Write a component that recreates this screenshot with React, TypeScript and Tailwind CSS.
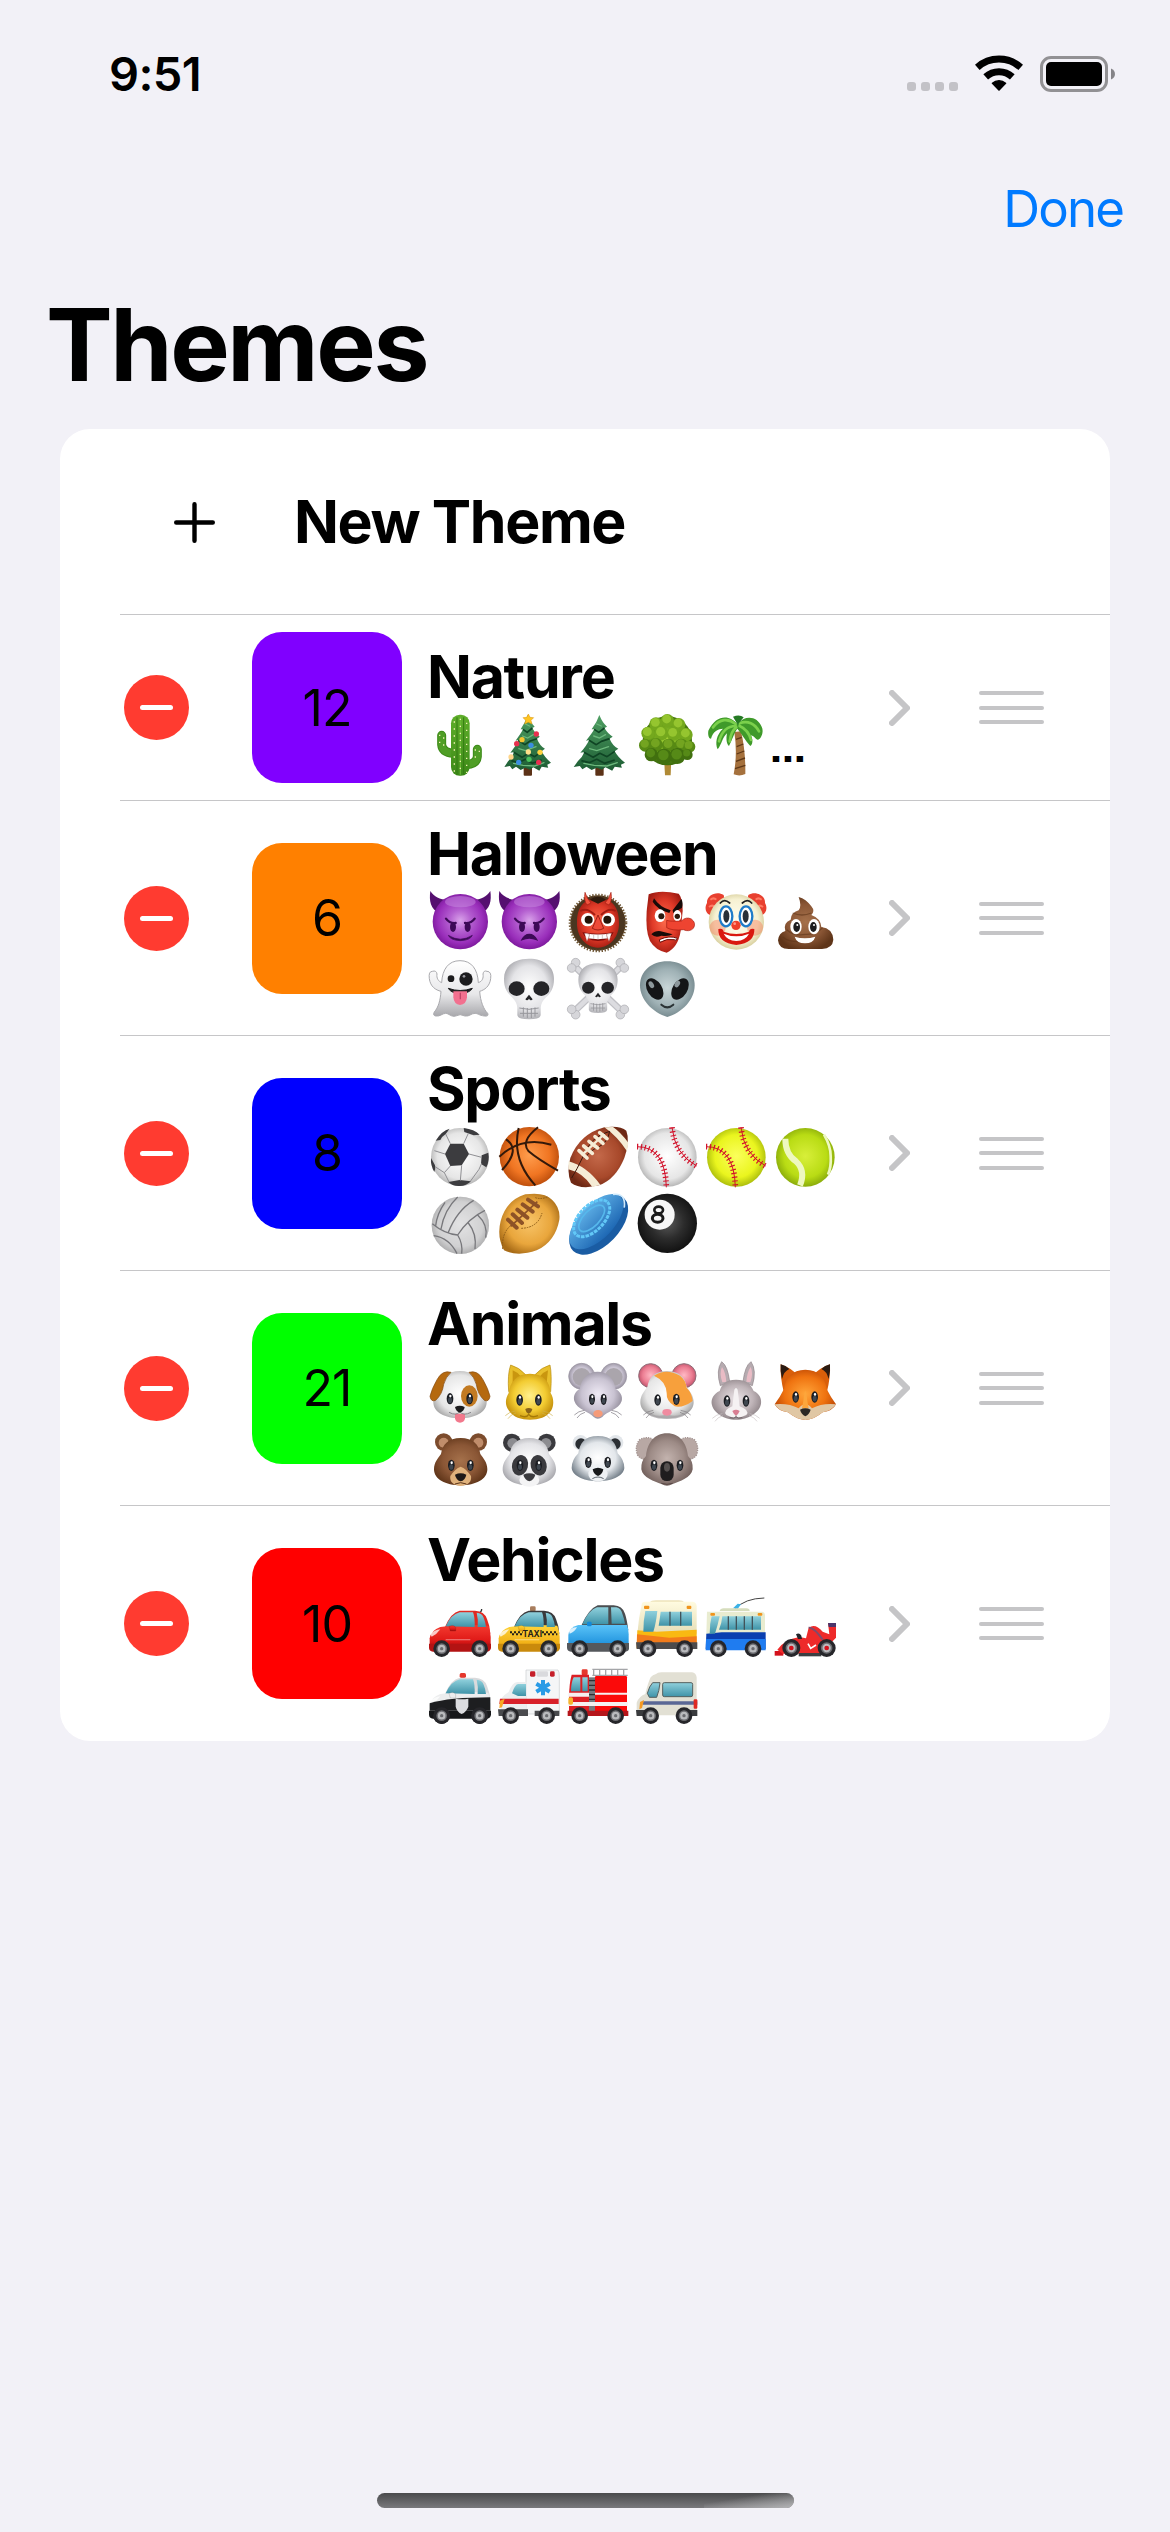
import React from "react";

/* ---------- shared paint ---------- */

type Stop = [number, string];

const radial: Record<string, Stop[]> = {
  gPurple: [[0, "#d9a2ea"], [0.35, "#b45fd0"], [0.72, "#9a2fbb"], [1, "#741293"]],
  gRed: [[0, "#fb6a4c"], [0.6, "#e03a28"], [1, "#a31c12"]],
  gCream: [[0, "#fffef0"], [0.7, "#f6f1d2"], [1, "#cfc58f"]],
  gBrown: [[0, "#a5714b"], [0.6, "#8a5635"], [1, "#5f3519"]],
  gBone: [[0, "#ffffff"], [0.65, "#e4e4e7"], [1, "#a9a9ae"]],
  gAlien: [[0, "#c9d6d8"], [0.6, "#9fb1b5"], [1, "#6f8388"]],
  gBall: [[0, "#ffffff"], [0.7, "#e6e6e6"], [1, "#a8a8a8"]],
  gOrange: [[0, "#ff9d4d"], [0.6, "#f07522"], [1, "#b44708"]],
  gLeather: [[0, "#c4694a"], [0.65, "#a8492b"], [1, "#6e2814"]],
  gSoft: [[0, "#fbff5c"], [0.65, "#eaf51e"], [1, "#9db008"]],
  gTennis: [[0, "#d8ef3a"], [0.65, "#b9dc14"], [1, "#7fa008"]],
  gRugby: [[0, "#f8c468"], [0.65, "#e9a63c"], [1, "#a96c17"]],
  gBlack: [[0, "#5a5a5a"], [0.5, "#2c2c2c"], [1, "#0d0d0d"]],
  gLeaf: [[0, "#a9d63a"], [0.5, "#6fa51c"], [1, "#33610a"]],
  gYellow: [[0, "#fff08c"], [0.6, "#f3cc32"], [1, "#c18d0a"]],
  gMouse: [[0, "#efeaf5"], [0.6, "#c9c3d2"], [1, "#8b8593"]],
  gRabbit: [[0, "#eae3e6"], [0.6, "#bfb4b8"], [1, "#8d8286"]],
  gFox: [[0, "#ffa53a"], [0.6, "#ef7310"], [1, "#b94403"]],
  gPolar: [[0, "#ffffff"], [0.6, "#e3e7eb"], [1, "#75808a"]],
  gKoala: [[0, "#c3b3ae"], [0.6, "#9d8b86"], [1, "#6f5d59"]],
  gPink: [[0, "#ffb9c4"], [0.6, "#ec7e93"], [1, "#b94a63"]],
};

const linear: Record<string, Stop[]> = {
  lGlass: [[0, "#8fd0dc"], [1, "#3f93a8"]],
  lRed: [[0, "#f43b30"], [0.6, "#e01a18"], [1, "#a80c0c"]],
  lTaxi: [[0, "#ffd53a"], [1, "#eca40a"]],
  lBlue: [[0, "#5ac3f8"], [1, "#1489d8"]],
  lCactus: [[0, "#5fae2a"], [1, "#3d8a18"]],
  lPine: [[0, "#4f9f63"], [1, "#1d5c33"]],
  lFrisbee: [[0, "#5fb0e6"], [1, "#1e68b4"]],
  lGhost: [[0, "#ffffff"], [0.6, "#e8e8ea"], [1, "#a8a8ac"]],
  lCream: [[0, "#fffbe0"], [1, "#e6deb8"]],
};

function Paint() {
  return (
    <svg className="absolute h-0 w-0" aria-hidden="true">
      <defs>
        {Object.entries(radial).map(([id, stops]) => (
          <radialGradient key={id} id={id} cx="0.5" cy="0.48" r="0.56">
            {stops.map(([o, c]) => (
              <stop key={o} offset={o} stopColor={c} />
            ))}
          </radialGradient>
        ))}
        {Object.entries(linear).map(([id, stops]) => (
          <linearGradient key={id} id={id} x1="0" y1="0" x2="0" y2="1">
            {stops.map(([o, c]) => (
              <stop key={o} offset={o} stopColor={c} />
            ))}
          </linearGradient>
        ))}
      </defs>
    </svg>
  );
}

/* ---------- drawing helpers (186 x 186 canvas) ---------- */

const HEAD =
  "M93 30C130 30 148 50 152 78C160 90 173 102 173 124C173 154 138 172 93 172C48 172 13 154 13 124C13 102 26 90 34 78C38 50 56 30 93 30Z";

const Eye = ({ x, y, rx = 10, ry = 17 }: { x: number; y: number; rx?: number; ry?: number }) => (
  <g>
    <ellipse cx={x} cy={y} rx={rx} ry={ry} fill="#1b1d22" />
    <ellipse cx={x} cy={y + ry * 0.3} rx={rx * 0.6} ry={ry * 0.5} fill="#3f4750" />
    <ellipse cx={x + 1} cy={y - ry * 0.45} rx={rx * 0.35} ry={ry * 0.25} fill="#fff" />
  </g>
);

const Whiskers = ({ c = "#b9b3a8", y = 152 }: { c?: string; y?: number }) => (
  <path
    d={`M52 ${y}Q34 ${y + 2} 22 ${y + 14}M54 ${y + 6}Q38 ${y + 10} 30 ${y + 23}M134 ${y}Q152 ${y + 2} 164 ${y + 14}M132 ${y + 6}Q148 ${y + 10} 156 ${y + 23}`}
    fill="none"
    stroke={c}
    strokeWidth="2"
  />
);

const Wheel = ({ x, y = 155, r = 25 }: { x: number; y?: number; r?: number }) => (
  <g>
    <circle cx={x} cy={y} r={r} fill="#26262a" />
    <circle cx={x} cy={y} r={r * 0.64} fill="#6d6e72" />
    <circle cx={x} cy={y} r={r * 0.46} fill="#b9babd" />
    <circle cx={x} cy={y} r={r * 0.2} fill="#6a6b6f" />
  </g>
);

const Pine = ({ cx, w }: { cx: number; w: number }) => {
  const x = (k: number) => cx + k * w;
  return (
    <g>
      <rect x={cx - 12} y={158} width={25} height={27} rx={3} fill="#5c3217" />
      <path
        d={`M${cx} 3Q${x(0.12)} 26 ${x(0.3)} 38L${x(0.2)} 42Q${x(0.34)} 60 ${x(0.52)} 68L${x(0.4)} 74Q${x(0.52)} 96 ${x(0.74)} 104L${x(0.6)} 112Q${x(0.74)} 132 ${x(1)} 146L${x(0.84)} 152L${x(0.88)} 161L${x(0.6)} 158L${x(0.5)} 170L${x(0.24)} 160L${x(0.1)} 167L${x(-0.1)} 161L${x(-0.3)} 168L${x(-0.5)} 158L${x(-0.66)} 166L${x(-0.76)} 156L${x(-1)} 159L${x(-0.84)} 142Q${x(-0.66)} 130 ${x(-0.58)} 114L${x(-0.74)} 116Q${x(-0.5)} 96 ${x(-0.4)} 78L${x(-0.52)} 80Q${x(-0.3)} 60 ${x(-0.2)} 46L${x(-0.3)} 46Q${x(-0.1)} 26 ${cx} 3Z`}
        fill="url(#lPine)"
      />
      <path
        d={`M${x(-0.2)} 46L${x(-0.02)} 55L${x(0.2)} 42M${x(-0.4)} 79L${x(-0.12)} 92L${x(0.08)} 82L${x(0.4)} 74M${x(-0.6)} 115L${x(-0.24)} 130L${x(0.02)} 118L${x(0.3)} 128L${x(0.6)} 112M${x(-0.7)} 140L${x(-0.4)} 146L${x(-0.1)} 136L${x(0.2)} 148L${x(0.6)} 138`}
        fill="none"
        stroke="#0f4424"
        strokeWidth="5"
        strokeLinejoin="round"
      />
      <path
        d={`M${x(-0.1)} 30L${x(0.08)} 36M${x(-0.22)} 66L${x(0)} 72L${x(0.24)} 62M${x(-0.38)} 104L${x(-0.1)} 110L${x(0.36)} 98M${x(-0.6)} 148L${x(-0.2)} 154L${x(0.3)} 156L${x(0.7)} 146`}
        fill="none"
        stroke="#6cb87c"
        strokeWidth="4"
        strokeLinecap="round"
      />
    </g>
  );
};

const DevilHead = () => (
  <g>
    <path d="M4 0C0 28 4 56 32 66L62 26C36 28 16 18 4 0Z" fill="#551070" />
    <path d="M184 0C188 28 184 56 156 66L126 26C152 28 172 18 184 0Z" fill="#551070" />
    <circle cx="94" cy="92" r="83" fill="url(#gPurple)" />
    <ellipse cx="94" cy="32" rx="46" ry="17" fill="#c78be0" opacity="0.5" />
    <ellipse cx="72" cy="108" rx="9" ry="15" fill="#3d0a57" />
    <ellipse cx="116" cy="108" rx="9" ry="15" fill="#3d0a57" />
    <path d="M51 83Q62 98 80 96M137 83Q126 98 108 96" fill="none" stroke="#3d0a57" strokeWidth="7" strokeLinecap="round" />
  </g>
);

const BallLaces = () => (
  <g>
    <path d="M3 62Q88 62 91 184M108 4Q116 84 182 120" fill="none" stroke="#d2132c" strokeWidth="3" />
    <path d="M3 62Q88 62 91 184" fill="none" stroke="#d2132c" strokeWidth="17" strokeDasharray="3.5 8" />
    <path d="M108 4Q116 84 182 120" fill="none" stroke="#d2132c" strokeWidth="17" strokeDasharray="3.5 8" />
  </g>
);

const RoundCar = ({ body, lower, roof }: { body: string; lower: string; roof: string }) => (
  <g>
    <path d="M48 90Q66 46 92 41H138Q166 42 174 66Q182 84 184 110H44Z" fill={roof} />
    <path d="M2 154V124Q6 100 34 90Q90 80 178 86Q184 100 185 120V154Q182 160 172 160H12Q3 160 2 154Z" fill={body} />
    <path d="M0 140H186V152Q184 164 172 164H12Q0 162 0 152Z" fill={lower} />
    <path d="M50 88Q66 52 92 46H132Q138 60 137 90Z" fill="url(#lGlass)" />
    <path d="M143 47Q160 48 164 62Q170 76 171 90H146Q148 66 143 47Z" fill="url(#lGlass)" />
    <path d="M4 112Q16 98 34 97Q24 112 8 119Z" fill="#fff" opacity="0.75" />
    <path d="M60 88Q76 82 80 92V102H64Z" fill={body} stroke="#00000033" strokeWidth="2" />
    <path d="M50 128H124" stroke="#fff" opacity="0.35" strokeWidth="4" />
    <Wheel x={38} />
    <Wheel x={152} />
  </g>
);

const Skull = () => (
  <g>
    <path
      d="M93 2C140 2 168 26 168 62C168 92 158 104 144 118C134 128 130 136 128 148V172Q126 184 93 184Q60 184 58 172V148C56 136 52 128 42 118C28 104 18 92 18 62C18 26 46 2 93 2Z"
      fill="url(#gBone)"
    />
    <ellipse cx="56" cy="92" rx="24" ry="22" fill="#252528" />
    <ellipse cx="130" cy="92" rx="24" ry="22" fill="#252528" />
    <path d="M93 110L82 124Q88 130 93 122Q98 130 104 124Z" fill="#252528" />
    <path d="M64 150Q93 158 122 150M66 166H120M76 148V176M88 150V180M100 150V180M111 148V176" stroke="#97979c" strokeWidth="3" fill="none" />
  </g>
);

/* ---------- emoji art ---------- */

const art: Record<string, React.ReactNode> = {
  "🌵": (
    <g>
      <path d="M38 64V92Q40 116 74 118M145 106V128Q143 150 112 152" fill="none" stroke="#3d8a18" strokeWidth="27" strokeLinecap="round" />
      <path d="M38 64V92Q40 116 74 118M145 106V128Q143 150 112 152" fill="none" stroke="#4f9e26" strokeWidth="21" strokeLinecap="round" />
      <rect x="66" y="2" width="56" height="183" rx="26" fill="url(#lCactus)" />
      <path d="M84 10V182M104 10V182" stroke="#347a14" strokeWidth="3" />
      <path d="M94 8V182" stroke="#68b534" strokeWidth="4" />
      <path d="M76 22V178M94 14V178M113 26V178M32 62V96M44 70V104M139 106V132M151 110V128" stroke="#f3efb4" strokeWidth="4" strokeDasharray="4 17" />
    </g>
  ),
  "🎄": (
    <g>
      <Pine cx={89} w={70} />
      <path d="M91 0L96 10L107 11L99 19L102 30L91 25L80 30L83 19L75 11L86 10Z" fill="#ffc421" stroke="#d9930b" strokeWidth="1.5" />
      {[
        [115, 60, "#e8304f"], [72, 77, "#f5c431"], [56, 89, "#e8304f"], [99, 94, "#3b8ee0"], [91, 114, "#ffe08a"],
        [126, 115, "#ffd23e"], [39, 129, "#ffd58a"], [62, 145, "#3b8ee0"], [122, 145, "#e8304f"], [93, 136, "#48c05c"],
      ].map(([x, y, c]) => (
        <circle key={`${x}-${y}`} cx={x} cy={y} r="8" fill={c as string} />
      ))}
    </g>
  ),
  "🌲": <Pine cx={97} w={77} />,
  "🌳": (
    <g>
      <path d="M84 130H106L104 184H87Z" fill="#b08a35" />
      <circle cx="94" cy="80" r="74" fill="url(#gLeaf)" />
      {[
        [94, 20, 20], [60, 30, 20], [128, 32, 20], [36, 58, 20], [76, 58, 21], [112, 60, 20], [150, 62, 20], [28, 94, 19],
        [60, 92, 20], [98, 94, 20], [136, 94, 20], [160, 98, 18], [46, 122, 20], [84, 128, 24], [124, 126, 24], [154, 122, 16],
      ].map(([x, y, r]) => (
        <g key={`${x}-${y}`}>
          <circle cx={x} cy={y} r={r} fill={y > 110 ? "#41700f" : y > 80 ? "#578a14" : "#74a81d"} />
          <circle cx={x - 2} cy={y - 5} r={r * 0.66} fill={y > 110 ? "#568a17" : y > 80 ? "#73a420" : "#95c52f"} />
        </g>
      ))}
    </g>
  ),
  "🌴": (
    <g>
      <path d="M88 54L108 52Q122 110 121 180Q104 188 86 181Q98 120 88 54Z" fill="#a5713d" />
      <path d="M93 76L110 70M95 98L115 90M95 120L118 111M93 142L120 132M90 164L121 154" stroke="#5e3716" strokeWidth="4" />
      <path d="M97 30C74 2 34 0 10 50C8 64 12 74 18 74C24 52 40 44 54 44C34 62 30 88 38 106C50 92 52 70 66 58C62 78 66 92 72 96C82 76 88 56 97 44C108 56 120 78 136 96C144 92 144 76 138 64C152 68 154 84 164 74C172 66 176 50 170 38C158 8 122 0 97 30Z" fill="#3f9a2a" />
      <path d="M92 30C70 12 44 14 24 40M92 36C66 36 50 54 42 82M94 40C80 50 76 66 74 82M104 36C122 44 134 62 138 78M104 28C128 18 150 30 162 52" stroke="#7bd04c" strokeWidth="8" fill="none" strokeLinecap="round" />
      <path d="M84 8Q104 0 116 10L98 32Z" fill="#257a24" />
    </g>
  ),
  "😈": (
    <g>
      <DevilHead />
      <path d="M58 133Q94 156 130 133Q124 148 94 149Q64 148 58 133Z" fill="#3d0a57" stroke="#3d0a57" strokeWidth="2" />
    </g>
  ),
  "👿": (
    <g>
      <DevilHead />
      <path d="M72 146Q80 130 94 130Q108 130 116 146Q94 136 72 146Z" fill="#3d0a57" stroke="#3d0a57" strokeWidth="4" />
    </g>
  ),
  "👹": (
    <g>
      <circle cx="93" cy="96" r="83" fill="#4a3620" />
      <circle cx="93" cy="96" r="84" fill="none" stroke="#6b5230" strokeWidth="8" strokeDasharray="4 5" />
      <path d="M93 22C136 22 156 50 156 94C158 136 130 170 93 170C56 170 28 136 30 94C30 50 50 22 93 22Z" fill="url(#gRed)" />
      <path d="M68 26Q93 8 118 26L93 38Z" fill="#2c1b0d" />
      <path d="M54 4Q50 30 60 42L72 36Q60 24 54 4ZM132 4Q136 30 126 42L114 36Q126 24 132 4Z" fill="#f2533e" stroke="#a31c12" strokeWidth="2" />
      <path d="M40 60Q60 48 84 72M146 60Q126 48 102 72" stroke="#a31c12" strokeWidth="6" fill="none" />
      <circle cx="62" cy="86" r="20" fill="#fff" />
      <circle cx="124" cy="86" r="20" fill="#fff" />
      <circle cx="65" cy="86" r="12" fill="#241408" />
      <circle cx="121" cy="86" r="12" fill="#241408" />
      <path d="M93 72L76 112Q93 122 110 112Z" fill="#ee4a38" stroke="#8b140d" strokeWidth="2.5" />
      <path d="M46 124Q93 132 140 124Q132 148 93 150Q54 148 46 124Z" fill="#7e0d0b" />
      <path d="M56 127Q93 134 130 127L126 142Q93 147 60 142Z" fill="#fff" />
      <path d="M66 129V142M80 131V144M93 132V145M106 131V144M120 129V142" stroke="#b9a9a4" strokeWidth="2" />
      <path d="M52 126L60 152L68 130ZM134 126L126 152L118 130Z" fill="#fff" stroke="#8b140d" strokeWidth="1" />
    </g>
  ),
  "👺": (
    <g>
      <path d="M38 10Q70 -4 128 8Q140 20 140 60L134 120Q126 170 92 185Q58 178 42 150Q28 120 32 60Z" fill="url(#gRed)" />
      <path d="M54 22Q72 50 104 58L100 66Q64 56 50 32ZM110 58L136 24Q142 34 138 50L112 66Z" fill="#170b08" />
      <ellipse cx="72" cy="74" rx="16" ry="19" fill="#fff" />
      <ellipse cx="124" cy="74" rx="12" ry="17" fill="#fff" />
      <circle cx="76" cy="76" r="9" fill="#2c1a0e" />
      <circle cx="124" cy="76" r="8" fill="#2c1a0e" />
      <path d="M92 88Q104 92 136 90Q150 76 166 84Q182 96 172 112Q160 124 142 116Q110 120 92 110Z" fill="#ee4431" stroke="#a31c12" strokeWidth="2" />
      <path d="M46 130Q60 116 80 122L110 130Q98 138 76 134Q58 142 46 130Z" fill="#170b08" />
      <path d="M70 146Q100 132 124 142Q122 152 114 146Q92 142 72 154Z" fill="#fff" stroke="#6c0e09" strokeWidth="3" />
    </g>
  ),
  "🤡": (
    <g>
      <path d="M56 12C34 -2 4 14 6 36C-4 52 4 76 24 72L62 40ZM130 12C152 -2 182 14 180 36C190 52 182 76 162 72L124 40Z" fill="#e8402f" />
      <path d="M16 26Q26 18 34 26M12 48Q22 40 30 48M170 26Q160 18 152 26M174 48Q164 40 156 48" stroke="#ff7a63" strokeWidth="6" fill="none" />
      <circle cx="94" cy="93" r="83" fill="url(#gCream)" />
      <circle cx="38" cy="110" r="24" fill="#f77f5d" opacity="0.45" />
      <circle cx="150" cy="110" r="24" fill="#f77f5d" opacity="0.45" />
      <ellipse cx="63" cy="76" rx="19" ry="30" fill="#fff" stroke="#1f7cc9" strokeWidth="7" />
      <ellipse cx="123" cy="76" rx="19" ry="30" fill="#fff" stroke="#1f7cc9" strokeWidth="7" />
      <ellipse cx="64" cy="76" rx="9" ry="19" fill="#2a3038" />
      <ellipse cx="122" cy="76" rx="9" ry="19" fill="#2a3038" />
      <path d="M46 36Q58 22 74 36M112 36Q128 22 140 36" stroke="#222" strokeWidth="5" fill="none" strokeLinecap="round" />
      <circle cx="93" cy="103" r="14" fill="#ee3f2b" />
      <circle cx="89" cy="98" r="4" fill="#ff9b8b" />
      <path d="M40 114Q54 110 56 122Q94 136 132 122Q134 110 148 114Q150 156 94 162Q38 156 40 114Z" fill="#d9180f" />
      <path d="M56 128Q94 144 132 128Q122 148 94 150Q66 148 56 128Z" fill="#fff" />
    </g>
  ),
  "💩": (
    <g>
      <path d="M74 18Q96 24 112 46Q124 60 112 72Q140 82 142 108Q176 112 178 146Q176 172 144 174H44Q14 174 12 148Q14 126 34 120Q26 96 50 86Q50 66 74 58Q84 46 74 18Z" fill="url(#gBrown)" />
      <path d="M56 66Q84 78 112 66M38 116Q60 136 94 130Q126 132 146 110M26 138Q50 158 100 150" stroke="#5f3519" strokeWidth="4" fill="none" opacity="0.6" />
      <ellipse cx="66" cy="107" rx="17" ry="23" fill="#fff" />
      <ellipse cx="120" cy="107" rx="17" ry="23" fill="#fff" />
      <ellipse cx="68" cy="108" rx="10" ry="15" fill="#1d1d1f" />
      <ellipse cx="118" cy="108" rx="10" ry="15" fill="#1d1d1f" />
      <circle cx="70" cy="102" r="3" fill="#fff" />
      <circle cx="120" cy="102" r="3" fill="#fff" />
      <path d="M62 137Q93 146 124 137Q118 157 93 157Q68 157 62 137Z" fill="#fff" />
    </g>
  ),
  "👻": (
    <g>
      <path
        d="M93 8C128 8 146 34 148 74C160 70 164 60 162 48Q164 36 174 40Q188 40 185 62C182 86 166 96 152 100C154 130 164 154 176 166Q180 176 166 174C150 172 146 166 138 166C126 166 122 176 108 174Q93 166 80 174C66 178 60 166 50 166C40 166 34 176 20 174Q10 172 16 162C28 148 34 128 36 100C20 96 4 86 1 62Q-2 40 10 40Q22 36 24 48C22 60 28 70 38 74C40 34 58 8 93 8Z"
        fill="url(#lGhost)"
        stroke="#aaaaae"
        strokeWidth="3"
      />
      <circle cx="66" cy="62" r="10" fill="#1c1c1e" />
      <circle cx="111" cy="63" r="20" fill="#1c1c1e" />
      <circle cx="105" cy="55" r="4" fill="#9a9aa0" />
      <path d="M58 91Q93 104 130 91Q122 106 93 106Q66 106 58 91Z" fill="#1c1c1e" stroke="#1c1c1e" strokeWidth="3" />
      <path d="M73 100H114V118Q112 140 93 141Q75 140 73 118Z" fill="#f2708f" />
      <path d="M94 104V124" stroke="#bf4667" strokeWidth="4" />
    </g>
  ),
  "💀": <Skull />,
  "☠️": (
    <g>
      <path d="M22 24L164 160M164 24L22 160" stroke="#c0c0c5" strokeWidth="21" strokeLinecap="round" />
      <path d="M22 24L164 160M164 24L22 160" stroke="#dcdce0" strokeWidth="13" strokeLinecap="round" />
      {[[26, 14], [14, 30], [160, 14], [172, 30], [26, 170], [14, 154], [160, 170], [172, 154]].map(([x, y]) => (
        <circle key={`${x}-${y}`} cx={x} cy={y} r="13" fill="#d6d6da" stroke="#a9a9ae" strokeWidth="2" />
      ))}
      <g transform="translate(20 14) scale(0.785 0.82)">
        <Skull />
      </g>
    </g>
  ),
  "👽": (
    <g>
      <path d="M94 10C142 10 176 40 176 82C176 126 138 164 94 177C50 164 12 126 12 82C12 40 46 10 94 10Z" fill="url(#gAlien)" />
      <ellipse cx="56" cy="93" rx="22" ry="35" transform="rotate(-32 56 93)" fill="#141517" />
      <ellipse cx="132" cy="93" rx="22" ry="35" transform="rotate(32 132 93)" fill="#141517" />
      <ellipse cx="46" cy="80" rx="7" ry="11" transform="rotate(-32 46 80)" fill="#8c979b" />
      <ellipse cx="124" cy="78" rx="7" ry="11" transform="rotate(32 124 78)" fill="#8c979b" />
      <path d="M76 140Q94 156 112 140" stroke="#2b3335" strokeWidth="6" fill="none" strokeLinecap="round" />
    </g>
  ),
  "⚽": (
    <g>
      <circle cx="93" cy="93" r="87" fill="url(#gBall)" />
      <path d="M64 53H104L120 84L98 118L64 120L48 84Z" fill="#3c3c3f" />
      <path d="M20 44Q38 14 62 8L50 24Q40 30 34 42ZM104 6Q136 10 152 26L134 28L106 18ZM158 88L178 80Q182 104 172 124L156 114ZM6 96L18 118Q20 128 16 138Q4 118 6 96ZM58 168L92 162L126 166Q110 182 88 180Q70 180 58 168Z" fill="#3c3c3f" />
      <path d="M64 53L50 24M104 53L118 22M120 84L158 94M98 118L94 164M64 120L46 140M48 84L16 74M46 140L18 122M46 140L60 168M150 130L158 112M150 130L124 166" stroke="#8f8f93" strokeWidth="3" fill="none" />
    </g>
  ),
  "🏀": (
    <g>
      <circle cx="94" cy="92" r="89" fill="url(#gOrange)" />
      <path d="M4 92Q70 30 160 56M62 6Q40 100 112 178M120 4Q66 46 92 76Q120 100 180 134M24 40Q70 70 12 132" stroke="#33190a" strokeWidth="6" fill="none" />
    </g>
  ),
  "🏈": (
    <g>
      <path d="M112 4Q160 -2 178 14Q190 46 172 96Q146 160 96 178Q40 192 12 170Q-2 140 10 96Q38 24 112 4Z" fill="url(#gLeather)" />
      <path d="M5 106Q58 120 100 176L76 183Q48 140 4 130ZM112 4Q150 30 180 76L184 50Q160 18 138 3Z" fill="#f5ecd6" />
      <path d="M14 156Q30 130 46 96Q70 30 128 16Q122 50 96 62Q64 76 54 98" stroke="#3c180c" strokeWidth="3" fill="none" />
      <path d="M44 88L112 24" stroke="#f5ecd6" strokeWidth="7" />
      <path d="M36 74L60 96M50 60L76 82M66 46L92 66M84 32L108 52M98 20L120 38" stroke="#f5ecd6" strokeWidth="11" strokeLinecap="round" />
    </g>
  ),
  "⚾": (
    <g>
      <circle cx="94" cy="94" r="88" fill="url(#gBall)" />
      <BallLaces />
    </g>
  ),
  "🥎": (
    <g>
      <circle cx="94" cy="94" r="88" fill="url(#gSoft)" />
      <BallLaces />
    </g>
  ),
  "🎾": (
    <g>
      <circle cx="94" cy="94" r="88" fill="url(#gTennis)" />
      <path d="M34 38Q34 84 66 106Q96 134 78 178" stroke="#eef8c0" strokeWidth="18" fill="none" />
      <path d="M150 26Q170 60 170 90Q172 124 162 146" stroke="#eef8c0" strokeWidth="8" fill="none" />
    </g>
  ),
  "🏐": (
    <g>
      <circle cx="94" cy="97" r="86" fill="url(#gBall)" />
      <circle cx="94" cy="97" r="86" fill="#9a9a9e" opacity="0.28" />
      <path d="M10 92Q46 122 86 126Q118 76 168 52M48 28Q24 62 20 98M86 12Q46 50 36 108M134 22Q84 52 58 118M86 126Q102 152 98 182M118 90Q144 122 138 168M146 66Q178 96 170 134M14 128Q60 134 84 182" stroke="#77777b" strokeWidth="4" fill="none" />
    </g>
  ),
  "🏉": (
    <g>
      <path d="M82 4Q140 -4 162 20Q188 44 184 80Q172 146 116 172Q60 192 18 172Q-4 130 8 84Q24 22 82 4Z" fill="url(#gRugby)" />
      <path d="M14 168Q10 120 40 96M70 106Q120 104 132 60M148 12Q128 20 112 14" stroke="#8b5a16" strokeWidth="3" strokeDasharray="5 3" fill="none" />
      <path d="M30 80L56 104M44 64L72 90M58 50L88 74M74 34L104 56M90 20L120 40" stroke="#8d5227" strokeWidth="12" strokeLinecap="round" />
      <path d="M38 100L118 26" stroke="#8d5227" strokeWidth="5" />
    </g>
  ),
  "🥏": (
    <g>
      <ellipse cx="95" cy="95" rx="110" ry="62" transform="rotate(-46 95 95)" fill="#1a5ca3" />
      <ellipse cx="88" cy="86" rx="104" ry="52" transform="rotate(-46 88 86)" fill="url(#lFrisbee)" />
      <ellipse cx="74" cy="76" rx="68" ry="37" transform="rotate(-46 74 76)" fill="none" stroke="#62c8f7" strokeWidth="9" strokeDasharray="11 3" />
      <ellipse cx="74" cy="76" rx="50" ry="24" transform="rotate(-46 74 76)" fill="none" stroke="#56b8ec" strokeWidth="5" />
      <path d="M140 4Q176 0 172 42" stroke="#cfeafc" strokeWidth="5" fill="none" strokeLinecap="round" />
    </g>
  ),
  "🎱": (
    <g>
      <circle cx="94" cy="91" r="89" fill="url(#gBlack)" />
      <circle cx="71" cy="65" r="45" fill="#f7f7f7" />
      <ellipse cx="68" cy="51" rx="13" ry="10" fill="none" stroke="#1b1b1b" strokeWidth="8" />
      <ellipse cx="65" cy="76" rx="16" ry="12" fill="none" stroke="#1b1b1b" strokeWidth="9" />
    </g>
  ),
  "🐶": (
    <g>
      <path d={HEAD} fill="url(#gBall)" />
      <path d="M66 34Q40 26 24 56Q8 84 3 106Q6 124 20 118Q40 100 44 70Q50 48 66 34ZM120 34Q146 26 162 56Q178 84 183 106Q180 124 166 118Q146 100 142 70Q136 48 120 34Z" fill="#b5690f" stroke="#82470a" strokeWidth="2" />
      <ellipse cx="121" cy="105" rx="25" ry="32" fill="#c27a22" />
      <Eye x={63} y={113} />
      <Eye x={122} y={113} />
      <path d="M78 158H108V172Q106 185 93 185Q80 185 78 172Z" fill="#f2788c" />
      <path d="M60 154Q82 166 92 152Q104 166 126 154" stroke="#88888c" strokeWidth="3" fill="none" />
      <path d="M78 138Q92 130 107 138Q106 150 92 155Q80 150 78 138Z" fill="#1c1c1e" />
    </g>
  ),
  "🐱": (
    <g>
      <path d="M38 12Q62 18 84 42L32 92Q28 40 38 12ZM156 12Q132 18 110 42L158 92Q162 40 156 12Z" fill="#e8bf2c" stroke="#b78a0b" strokeWidth="2" />
      <path d="M44 28Q60 34 70 48L44 64ZM150 28Q134 34 124 48L146 64Z" fill="#c9960f" />
      <path d="M96 38C138 38 156 64 158 96C168 112 168 132 160 148C146 170 122 176 96 176C70 176 46 170 32 148C20 132 22 112 32 96C36 64 54 38 96 38Z" fill="url(#gYellow)" />
      <Eye x={65} y={117} />
      <Eye x={121} y={117} />
      <path d="M82 144Q92 138 103 144Q100 156 92 158Q84 156 82 144Z" fill="#86611a" />
      <path d="M66 164Q86 172 92 160Q100 172 120 164" stroke="#a57908" strokeWidth="4" fill="none" />
      <Whiskers c="#cdb04a" y={150} />
    </g>
  ),
  "🐭": (
    <g>
      <circle cx="44" cy="46" r="39" fill="url(#gMouse)" stroke="#97919f" strokeWidth="2" />
      <circle cx="140" cy="46" r="39" fill="url(#gMouse)" stroke="#97919f" strokeWidth="2" />
      <circle cx="44" cy="48" r="27" fill="#aaa5ac" />
      <circle cx="140" cy="48" r="27" fill="#aaa5ac" />
      <path d="M92 32C124 32 142 56 146 84C160 92 168 106 164 120C156 146 116 152 106 168Q92 178 80 168C68 152 30 146 22 120C18 106 24 92 38 84C42 56 60 32 92 32Z" fill="url(#gMouse)" />
      <Eye x={75} y={115} rx={9} />
      <Eye x={110} y={115} rx={9} />
      <ellipse cx="93" cy="158" rx="14" ry="11" fill="#f59a78" />
      <Whiskers c="#77727c" y={148} />
    </g>
  ),
  "🐹": (
    <g>
      <circle cx="44" cy="44" r="36" fill="url(#gPink)" stroke="#8e6d78" strokeWidth="3" />
      <circle cx="144" cy="44" r="36" fill="url(#gPink)" stroke="#8e6d78" strokeWidth="3" />
      <path d={HEAD} fill="url(#gBall)" />
      <path d="M54 44Q90 20 132 44Q150 58 152 80Q168 96 170 120Q140 142 116 136Q90 120 92 96Q90 60 54 44Z" fill="#f7a03c" />
      <Eye x={65} y={117} />
      <Eye x={121} y={115} />
      <path d="M22 144Q60 174 92 160Q126 174 164 144Q150 174 93 174Q36 174 22 144Z" fill="#a3a0a2" opacity="0.7" />
      <ellipse cx="93" cy="154" rx="14" ry="10" fill="#f08ba0" />
      <Whiskers c="#807c80" y={148} />
    </g>
  ),
  "🐰": (
    <g>
      <path d="M50 2Q68 14 74 62L46 74Q32 28 50 2ZM138 2Q120 14 114 62L142 74Q156 28 138 2Z" fill="#b6abb0" stroke="#8d8286" strokeWidth="2" />
      <path d="M51 18Q62 34 64 62L52 64Q42 36 51 18ZM137 18Q126 34 124 62L136 64Q146 36 137 18Z" fill="#e9bcc5" />
      <path d="M93 56C124 56 138 70 146 90C164 98 170 114 168 128C164 154 130 176 93 176C56 176 24 154 20 128C18 114 26 98 44 90C50 70 62 56 93 56Z" fill="url(#gRabbit)" />
      <path d="M88 86Q93 76 98 86L104 136Q136 148 124 162Q93 178 64 162Q52 148 82 136Z" fill="#f5f2f3" />
      <Eye x={66} y={120} />
      <Eye x={123} y={120} />
      <path d="M82 150Q93 142 104 150Q100 160 93 164Q86 160 82 150Z" fill="#d97d92" />
      <path d="M93 164V170M74 170Q88 174 93 168Q100 174 112 170" stroke="#6e5f64" strokeWidth="3" fill="none" />
      <Whiskers c="#c9c1c4" y={158} />
    </g>
  ),
  "🦊": (
    <g>
      <path d="M20 10Q50 20 72 44L30 96Q18 50 20 10ZM168 10Q138 20 116 44L158 96Q170 50 168 10Z" fill="#d95f0a" />
      <path d="M20 10Q36 14 46 24Q30 30 24 54Q18 30 20 10ZM168 10Q152 14 142 24Q158 30 164 54Q170 30 168 10Z" fill="#2b1b12" />
      <path d="M94 26C134 26 154 52 158 84Q172 112 186 130Q176 150 146 154Q120 176 94 177Q68 176 42 154Q12 150 2 130Q16 112 30 84C34 52 54 26 94 26Z" fill="url(#gFox)" />
      <path d="M2 130Q44 126 74 142Q84 130 94 130Q104 130 114 142Q144 126 186 130Q172 150 146 154Q120 176 94 177Q68 176 42 154Q14 150 2 130Z" fill="#e0c7a4" />
      <path d="M88 120Q94 60 100 120L104 142H84Z" fill="#fca63c" />
      <Eye x={65} y={108} />
      <Eye x={122} y={108} />
      <path d="M78 146Q94 138 110 146Q106 160 94 166Q82 160 78 146Z" fill="#2c2825" />
    </g>
  ),
  "🐻": (
    <g>
      <circle cx="44" cy="42" r="26" fill="#7c4c2d" />
      <circle cx="148" cy="42" r="26" fill="#7c4c2d" />
      <circle cx="44" cy="44" r="15" fill="#c08d6b" />
      <circle cx="148" cy="44" r="15" fill="#c08d6b" />
      <path d={HEAD} transform="translate(2 0)" fill="url(#gBrown)" />
      <path d="M95 116Q112 122 126 144Q130 170 95 174Q60 170 64 144Q78 122 95 116Z" fill="#e0b27c" />
      <Eye x={67} y={112} />
      <Eye x={124} y={112} />
      <path d="M78 140Q95 132 112 140Q108 158 95 160Q82 158 78 140Z" fill="#1f1a18" />
      <path d="M78 168Q95 160 112 168" stroke="#5b3519" strokeWidth="3" fill="none" />
    </g>
  ),
  "🐼": (
    <g>
      <circle cx="42" cy="44" r="27" fill="#3a3a3e" />
      <circle cx="146" cy="44" r="27" fill="#3a3a3e" />
      <circle cx="44" cy="46" r="16" fill="#8c8c90" />
      <circle cx="144" cy="46" r="16" fill="#8c8c90" />
      <path d={HEAD} transform="translate(1 0)" fill="url(#gBone)" />
      <ellipse cx="66" cy="112" rx="24" ry="31" transform="rotate(14 66 112)" fill="#3a3a3e" />
      <ellipse cx="122" cy="112" rx="24" ry="31" transform="rotate(-14 122 112)" fill="#3a3a3e" />
      <Eye x={66} y={112} />
      <Eye x={122} y={112} />
      <ellipse cx="94" cy="156" rx="30" ry="20" fill="#f4f4f5" />
      <path d="M76 140Q94 132 112 140Q108 156 94 160Q80 156 76 140Z" fill="#3a3a3e" />
    </g>
  ),
  "🐻‍❄️": (
    <g>
      <circle cx="40" cy="44" r="23" fill="#e2e6ea" />
      <circle cx="146" cy="44" r="23" fill="#e2e6ea" />
      <circle cx="42" cy="48" r="17" fill="#2a2e33" />
      <circle cx="144" cy="48" r="17" fill="#2a2e33" />
      <path d="M93 24C134 24 148 46 152 76Q172 96 172 120C170 146 128 160 93 160C58 160 16 146 14 120Q14 96 34 76C38 46 52 24 93 24Z" fill="url(#gPolar)" />
      <path d="M93 108Q112 112 122 134Q124 158 93 160Q62 158 64 134Q74 112 93 108Z" fill="#eef1f4" />
      <Eye x={64} y={103} />
      <Eye x={122} y={103} />
      <path d="M77 124Q93 114 109 124Q106 140 93 144Q80 140 77 124Z" fill="#16181a" />
      <path d="M76 152Q93 142 110 152" stroke="#5e666e" strokeWidth="3" fill="none" />
    </g>
  ),
  "🐨": (
    <g>
      <path d="M58 40Q36 20 10 36Q-4 54 4 80Q14 96 34 94ZM128 40Q150 20 176 36Q190 54 182 80Q172 96 152 94Z" fill="#b8a8a4" stroke="#a39390" strokeWidth="4" strokeDasharray="4 3" />
      <path d="M93 16C132 16 152 46 156 84Q172 100 170 124C166 150 130 160 110 168Q93 178 76 168C56 160 20 150 16 124Q14 100 30 84C34 46 54 16 93 16Z" fill="url(#gKoala)" />
      <Eye x={54} y={112} />
      <Eye x={132} y={112} />
      <rect x="73" y="100" width="40" height="59" rx="19" fill="#1f1d1e" />
      <ellipse cx="93" cy="118" rx="9" ry="13" fill="#55504f" />
      <path d="M76 166Q93 172 110 166" stroke="#584845" strokeWidth="3" fill="none" />
    </g>
  ),
  "🚗": (
    <g>
      <path d="M148 48Q158 46 158 36" stroke="#333" strokeWidth="4" fill="none" />
      <RoundCar body="url(#lRed)" lower="#b31313" roof="#e02a22" />
    </g>
  ),
  "🚕": (
    <g>
      <rect x="96" y="28" width="17" height="15" rx="4" fill="#a87d5d" />
      <RoundCar body="url(#lTaxi)" lower="#c98a0c" roof="#3a3a3c" />
      <path d="M36 106H74M132 106H178" stroke="#26221a" strokeWidth="6" strokeDasharray="6 6" />
      <path d="M42 112H74M138 112H178" stroke="#26221a" strokeWidth="6" strokeDasharray="6 6" />
      <text x="103" y="119" textAnchor="middle" className="font-['Inter'] text-[25px] font-bold" fill="#26221a">
        TAXI
      </text>
    </g>
  ),
  "🚙": (
    <g>
      <path d="M42 88Q64 36 92 25H140Q166 26 174 50Q180 68 184 100H40Z" fill="#4a4d50" />
      <path d="M4 154V114Q6 92 34 84H180Q185 96 185 112V154Z" fill="url(#lBlue)" />
      <path d="M0 138H186V156Q184 164 172 164H12Q0 162 0 152Z" fill="#55585c" />
      <path d="M46 82Q66 38 90 31H124V82Z" fill="url(#lGlass)" />
      <path d="M132 31H148Q162 34 166 50Q172 66 174 80H134Z" fill="url(#lGlass)" />
      <path d="M6 102Q16 90 30 91Q24 104 8 110Z" fill="#fff" opacity="0.8" />
      <rect x="60" y="74" width="14" height="14" rx="4" fill="#1489d8" />
      <Wheel x={38} />
      <Wheel x={152} />
    </g>
  ),
  "🚌": (
    <g>
      <path d="M42 16Q44 10 60 10H128Q142 10 144 16Z" fill="#eee3ba" />
      <path d="M18 18Q20 14 30 14H170Q182 16 182 28V110H4Q8 60 18 18Z" fill="url(#lCream)" />
      <path d="M4 100L62 104L182 98V154H2Z" fill="#f9b912" />
      <path d="M3 112L100 122L182 118V154H2Z" fill="#f27b1b" />
      <path d="M0 136H184V156H2Z" fill="#4d4b4c" />
      <path d="M28 42H64Q60 80 52 104H22Q22 70 28 42Z" fill="url(#lGlass)" />
      <path d="M74 44H168V86H68Q72 62 74 44Z" fill="url(#lGlass)" />
      <path d="M102 44V86M134 44V86" stroke="#41535a" strokeWidth="4" />
      <rect x="24" y="26" width="16" height="10" rx="3" fill="#f0941c" />
      <rect x="152" y="26" width="14" height="10" rx="3" fill="#f0941c" />
      <Wheel x={36} />
      <Wheel x={146} />
    </g>
  ),
  "🚎": (
    <g>
      <path d="M90 36Q120 4 178 3" stroke="#444" strokeWidth="3" fill="none" />
      <path d="M84 34L98 20L108 22L98 36Z" fill="#3bb2e6" />
      <path d="M44 42Q46 34 56 34H124Q134 34 134 42Z" fill="#d6ddbd" />
      <path d="M6 44H172Q180 46 180 56V112H4Z" fill="#e9ecd0" />
      <path d="M4 110L50 106H182V156H2Z" fill="#0a3fb0" />
      <path d="M3 126H182V160H2Z" fill="#1f7cf0" />
      <path d="M20 58H44Q38 86 30 110H14Q14 80 20 58Z" fill="url(#lGlass)" />
      <path d="M52 58H168V98H42Q50 80 52 58Z" fill="url(#lGlass)" />
      <path d="M70 58V98M94 58V98M118 58V98M142 58V98" stroke="#41535a" strokeWidth="4" />
      <rect x="16" y="48" width="14" height="8" rx="3" fill="#f0941c" />
      <rect x="158" y="48" width="14" height="8" rx="3" fill="#f0941c" />
      <Wheel x={40} />
      <Wheel x={144} />
    </g>
  ),
  "🏎️": (
    <g>
      <path d="M2 162H28V176H2Z" fill="#d4121c" />
      <path d="M10 158Q30 128 76 120L96 124L104 92Q124 78 146 104L166 112L162 78H186V122L168 140L164 170H26Z" fill="#ee2a2a" />
      <path d="M104 92Q120 90 146 128" stroke="#7e4b6c" strokeWidth="6" fill="none" />
      <path d="M162 78H186V90H164Z" fill="#4a356b" />
      <path d="M66 112Q76 106 82 116L84 126H72Z" fill="#22232a" />
      <path d="M74 168H142V178H74Z" fill="#3b3f42" />
      <path d="M102 140L110 154L126 144" stroke="#fff" strokeWidth="5" fill="none" />
      <Wheel x={52} y={153} r={27} />
      <Wheel x={158} y={153} r={27} />
      <circle cx="52" cy="153" r="7" fill="#d4121c" />
      <circle cx="158" cy="153" r="7" fill="#d4121c" />
    </g>
  ),
  "🚓": (
    <g>
      <rect x="92" y="27" width="19" height="15" rx="5" fill="#e5372c" />
      <RoundCar body="#ecedee" lower="#17181a" roof="#d9dadc" />
      <path d="M2 118Q60 100 184 100V140H2Z" fill="#1d1e20" />
      <path d="M80 104Q98 108 118 104V128Q112 144 98 150Q84 144 80 128Z" fill="#dcdde0" />
      <Wheel x={38} />
      <Wheel x={152} />
    </g>
  ),
  "🚑": (
    <g>
      <path d="M84 18H180Q184 22 184 40V150H84Z" fill="#f5f6f7" stroke="#c9cbce" strokeWidth="2" />
      <path d="M8 150V106Q20 90 32 84Q42 56 58 54H86V150Z" fill="#eceeef" />
      <path d="M42 88Q50 62 60 60H84V96H60Z" fill="url(#lGlass)" />
      <path d="M6 104H182V120H4Z" fill="#d8212a" />
      <path d="M0 136H90V156H2ZM110 140H184V156H110Z" fill="#4a4b4e" />
      <rect x="96" y="22" width="16" height="16" rx="4" fill="#c5202a" />
      <rect x="156" y="22" width="14" height="16" rx="4" fill="#c5202a" />
      <rect x="116" y="22" width="34" height="16" rx="4" fill="#d9dadd" />
      <path d="M135 48V94M115 59L155 83M155 59L115 83" stroke="#2a9be6" strokeWidth="12" />
      <path d="M6 110L20 104L12 130L4 132Z" fill="#f7a823" />
      <Wheel x={38} />
      <Wheel x={146} />
    </g>
  ),
  "🚒": (
    <g>
      <path d="M76 16H182M76 34H182M80 16V34M98 16V34M116 16V34M134 16V34M152 16V34M170 16V34" stroke="#a4a5a8" strokeWidth="4" />
      <rect x="44" y="16" width="18" height="18" rx="4" fill="#e5372c" />
      <path d="M6 154V104Q6 60 14 32H66V154Z" fill="#dc1f24" />
      <path d="M12 82Q12 56 20 40H40V82ZM46 40H62V82H46Z" fill="url(#lGlass)" />
      <path d="M66 40H84V150H66Z" fill="#77797d" />
      <path d="M66 50H84M66 64H84M66 78H84M66 92H84M66 106H84" stroke="#2e3033" strokeWidth="4" />
      <rect x="84" y="36" width="96" height="116" rx="4" fill="#fb0a0a" />
      <path d="M4 86H66V98H4ZM4 114H182V126H4ZM84 86H180V92H84Z" fill="#f5f0f0" />
      <path d="M2 140H184V156H2Z" fill="#b5161b" />
      <rect x="4" y="100" width="14" height="22" rx="5" fill="#f7b52c" />
      <Wheel x={38} />
      <Wheel x={146} />
    </g>
  ),
  "🚐": (
    <g>
      <path d="M60 30Q64 25 76 25H168Q180 26 182 40V154H2V116Q10 96 28 90Q36 56 44 40Q50 32 60 30Z" fill="#e2e0d4" />
      <path d="M34 88Q40 66 50 56H72Q70 80 62 100H40Z" fill="url(#lGlass)" stroke="#55605f" strokeWidth="3" />
      <rect x="80" y="56" width="90" height="42" rx="5" fill="url(#lGlass)" stroke="#55605f" strokeWidth="3" />
      <path d="M22 112H184V122H20Z" fill="#5a6795" />
      <path d="M12 114L24 108L18 132L10 136Z" fill="#f59a23" />
      <rect x="173" y="106" width="11" height="28" rx="3" fill="#e02a22" />
      <path d="M0 138H40V156H2ZM160 138H184V156H160Z" fill="#3a3b3e" />
      <Wheel x={44} />
      <Wheel x={144} />
    </g>
  ),
};

function Emoji({ glyph }: { glyph: string }) {
  return (
    <svg viewBox="0 0 186 186" role="img" aria-label={glyph} className="h-[62px] w-[62px] shrink-0 overflow-visible">
      {art[glyph]}
    </svg>
  );
}

/* ---------- data ---------- */

type Theme = { name: string; count: number; tile: string; lines: string[][]; truncated?: boolean };

const themes: Theme[] = [
  { name: "Nature", count: 12, tile: "bg-[#8000ff]", truncated: true, lines: [["🌵", "🎄", "🌲", "🌳", "🌴"]] },
  { name: "Halloween", count: 6, tile: "bg-[#ff8000]", lines: [["😈", "👿", "👹", "👺", "🤡", "💩"], ["👻", "💀", "☠️", "👽"]] },
  { name: "Sports", count: 8, tile: "bg-[#0000ff]", lines: [["⚽", "🏀", "🏈", "⚾", "🥎", "🎾"], ["🏐", "🏉", "🥏", "🎱"]] },
  { name: "Animals", count: 21, tile: "bg-[#00ff00]", lines: [["🐶", "🐱", "🐭", "🐹", "🐰", "🦊"], ["🐻", "🐼", "🐻‍❄️", "🐨"]] },
  { name: "Vehicles", count: 10, tile: "bg-[#ff0000]", lines: [["🚗", "🚕", "🚙", "🚌", "🚎", "🏎️"], ["🚓", "🚑", "🚒", "🚐"]] },
];

/* ---------- page ---------- */

function StatusBar() {
  return (
    <div className="flex h-[150px] items-start justify-between pl-[109px] pr-[54px]">
      <span className="mt-[46px] text-[47px] leading-[56px] font-semibold tracking-[-0.6px]">9:51</span>
      <div className="mt-[55px] flex items-start">
        <div className="mt-[27px] flex gap-[5px]">
          {[0, 1, 2, 3].map((i) => (
            <span key={i} className="h-[9px] w-[9px] rounded-[3px] bg-[#c3c2c7]" />
          ))}
        </div>
        <svg viewBox="0 0 48 36" className="ml-[17px] h-[36px] w-[48px]" fill="none" stroke="#000" strokeWidth="7">
          <path d="M2.3 12.4A32.5 32.5 0 0 1 45.7 12.4" />
          <path d="M10.7 21.8A19.8 19.8 0 0 1 37.3 21.8" />
          <path d="M24 35L17.5 28.3A9.6 9.6 0 0 1 30.5 28.3Z" fill="#000" strokeWidth="1.6" strokeLinejoin="round" />
        </svg>
        <svg viewBox="0 0 76 36" className="ml-[17px] mt-[1px] h-[36px] w-[76px]">
          <rect x="1.5" y="1.5" width="65" height="33" rx="9.5" fill="none" stroke="#929194" strokeWidth="3" />
          <rect x="6" y="6" width="56" height="24" rx="5" fill="#000" />
          <path d="M71 12.5C76.3 14.5 76.3 21.5 71 23.5Z" fill="#858488" />
        </svg>
      </div>
    </div>
  );
}

function ThemeRow({ theme }: { theme: Theme }) {
  return (
    <li
      className={`ml-[60px] flex items-center border-t border-[#c6c6c8] last:h-[236px] ${theme.truncated ? "h-[186px]" : "h-[235px]"}`}
    >
      <svg viewBox="0 0 65 65" className="ml-[4px] h-[65px] w-[65px] shrink-0">
        <circle cx="32.5" cy="32.5" r="32.5" fill="#ff3b30" />
        <rect x="16" y="30" width="33" height="5" rx="2.5" fill="#fff" />
      </svg>
      <div
        className={`ml-[63px] flex h-[151px] w-[150px] shrink-0 items-center justify-center rounded-[30px] text-[50px] leading-none tracking-[-1px] ${theme.tile}`}
      >
        {theme.count}
      </div>
      <div className="ml-[27px] w-[440px] shrink-0">
        <h2 className="-ml-[2px] h-[75px] text-[59px] leading-[76px] font-bold tracking-[-1.3px]">{theme.name}</h2>
        <div className="flex flex-col gap-[5px]">
          {theme.lines.map((line, i) => (
            <div key={i} className="flex h-[62px] gap-[7px]">
              {line.map((glyph) => (
                <Emoji key={glyph} glyph={glyph} />
              ))}
              {theme.truncated && (
                <span className="-ml-[4px] pt-[6px] text-[32px] leading-[62px] font-black [font-feature-settings:'ss07']">…</span>
              )}
            </div>
          ))}
        </div>
      </div>
      <svg
        viewBox="0 0 21 36"
        className="ml-[20px] h-[36px] w-[21px] shrink-0"
        fill="none"
        stroke="#c5c5c7"
        strokeWidth="6"
        strokeLinecap="round"
        strokeLinejoin="round"
      >
        <path d="M3 3L18 18L3 33" />
      </svg>
      <div className="ml-[69px] flex w-[65px] shrink-0 flex-col gap-[10.5px]">
        <span className="h-[4px] rounded-full bg-[#c5c5c7]" />
        <span className="h-[4px] rounded-full bg-[#c5c5c7]" />
        <span className="h-[4px] rounded-full bg-[#c5c5c7]" />
      </div>
    </li>
  );
}

export default function App() {
  return (
    <div className="flex h-[2532px] w-[1170px] flex-col overflow-hidden bg-[#f2f1f7] font-['Inter','Liberation_Sans',sans-serif] text-black">
      <Paint />
      <StatusBar />
      <div className="flex h-[120px] items-center justify-end pr-[47px] pb-[3px]">
        <button className="text-[51px] leading-[60px] tracking-[-1.9px] text-[#007aff]">Done</button>
      </div>
      <h1 className="h-[159px] pl-[46px] text-[100px] leading-[150px] font-bold tracking-[-2.4px]">Themes</h1>
      <ul className="mx-[60px] overflow-hidden rounded-[30px] bg-white">
        <li className="flex h-[185px] items-center">
          <svg viewBox="0 0 41 41" className="ml-[114px] mt-[2px] h-[41px] w-[41px]" stroke="#000" strokeWidth="4.4" strokeLinecap="round">
            <path d="M20.5 2.2V38.8M2.2 20.5H38.8" />
          </svg>
          <span className="ml-[79px] text-[59px] leading-[76px] font-bold tracking-[-1.4px]">New Theme</span>
        </li>
        {themes.map((theme) => (
          <ThemeRow key={theme.name} theme={theme} />
        ))}
      </ul>
      <div className="mt-auto mb-[24px] h-[15px] w-[417px] self-center rounded-full bg-linear-to-b from-[#4b4b4d] to-[#79797c]">
        <div className="ml-auto h-full w-[90px] rounded-r-full bg-linear-to-br from-transparent from-35% to-[#b4b4b6]" />
      </div>
    </div>
  );
}
